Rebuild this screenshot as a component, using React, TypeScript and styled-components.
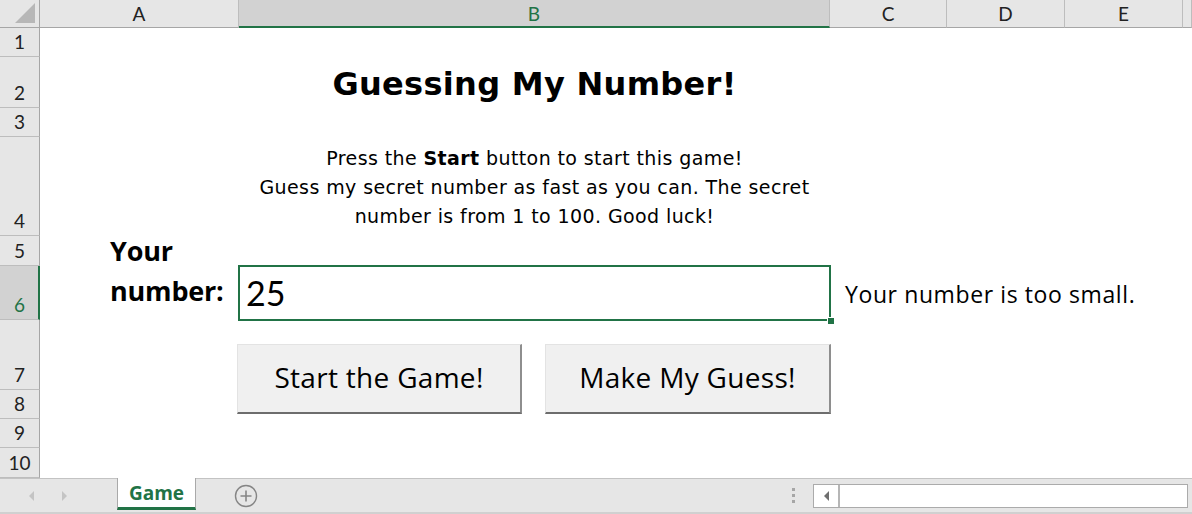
import React from "react";
import styled, { createGlobalStyle, css } from "styled-components";

const GREEN = "#217346";
const HEADER_BG = "#e6e6e6";
const HEADER_SEL = "#d2d2d2";
const HEADER_LINE = "#bdbdbd";

const COLS = [40, 199, 591, 117, 118, 118, 9];
const ROWS = [29, 51, 29, 99, 30, 54, 70, 29, 29, 30];
const LETTERS = ["A", "B", "C", "D", "E", ""];

const Global = createGlobalStyle`
  html, body { margin: 0; padding: 0; background: #fff; }
  body { width: 1192px; height: 514px; overflow: hidden; font-family: "Lato", "Liberation Sans", sans-serif; }
`;

const Window = styled.div`
  width: 1192px;
  height: 514px;
  display: flex;
  flex-direction: column;
  overflow: hidden;
`;

const Sheet = styled.div`
  display: grid;
  grid-template-columns: ${COLS.map((c) => (c === 9 ? "1fr" : `${c}px`)).join(" ")};
  grid-template-rows: 28px ${ROWS.map((r) => `${r}px`).join(" ")};
  height: 478px;
  background: #fff;
`;

const Corner = styled.div`
  grid-column: 1;
  grid-row: 1;
  background: ${HEADER_BG};
  border-right: 1px solid #a6a6a6;
  border-bottom: 1px solid #a6a6a6;
  box-sizing: border-box;
  position: relative;
  &::after {
    content: "";
    position: absolute;
    right: 4px;
    bottom: 4px;
    width: 0;
    height: 0;
    border-left: 20px solid transparent;
    border-bottom: 20px solid #b7b7b7;
  }
`;

const ColHeader = styled.div<{ $col: number; $sel?: boolean }>`
  grid-row: 1;
  grid-column: ${(p) => p.$col};
  background: ${(p) => (p.$sel ? HEADER_SEL : HEADER_BG)};
  border-right: 1px solid ${HEADER_LINE};
  border-bottom: ${(p) => (p.$sel ? `2px solid ${GREEN}` : "1px solid #a6a6a6")};
  box-sizing: border-box;
  display: flex;
  align-items: center;
  justify-content: center;
  font-family: "Lato", "Liberation Sans", sans-serif;
  font-size: 19px;
  color: ${(p) => (p.$sel ? GREEN : "#222")};
  padding-top: ${(p) => (p.$sel ? "1px" : "0")};
`;

const RowHeader = styled.div<{ $row: number; $sel?: boolean }>`
  grid-column: 1;
  grid-row: ${(p) => p.$row};
  background: ${(p) => (p.$sel ? HEADER_SEL : HEADER_BG)};
  border-bottom: 1px solid ${HEADER_LINE};
  border-right: ${(p) => (p.$sel ? `2px solid ${GREEN}` : "1px solid #a6a6a6")};
  box-sizing: border-box;
  display: flex;
  align-items: flex-end;
  justify-content: center;
  padding-bottom: 3px;
  font-family: "Lato", "Liberation Sans", sans-serif;
  font-size: 19px;
  line-height: 22px;
  color: ${(p) => (p.$sel ? GREEN : "#222")};
  ${(p) =>
    p.$sel &&
    css`
      padding-left: 1px;
    `}
`;

const Cell = styled.div<{ $col: string; $row: string }>`
  grid-column: ${(p) => p.$col};
  grid-row: ${(p) => p.$row};
  min-width: 0;
`;

const Title = styled(Cell)`
  display: flex;
  align-items: center;
  justify-content: center;
  font-family: "DejaVu Sans", "Open Sans", sans-serif;
  font-weight: 700;
  font-size: 32px;
  letter-spacing: 0.3px;
  color: #000;
  padding-top: 2px;
  white-space: nowrap;
`;

const Intro = styled(Cell)`
  display: flex;
  flex-direction: column;
  align-items: center;
  justify-content: flex-end;
  padding-bottom: 5px;
  font-family: "DejaVu Sans", "Open Sans", sans-serif;
  font-size: 19px;
  letter-spacing: 0.4px;
  line-height: 29px;
  color: #000;
  text-align: center;
  white-space: nowrap;
  b { font-weight: 700; }
`;

const Label = styled(Cell)`
  display: flex;
  flex-direction: column;
  justify-content: flex-end;
  padding-left: 70px;
  padding-bottom: 9px;
  font-family: "Open Sans", "Lato", sans-serif;
  font-weight: 700;
  font-size: 27px;
  letter-spacing: -0.2px;
  line-height: 40px;
  color: #000;
`;

const Active = styled(Cell)`
  margin: -1px -1px -1px -1px;
  border: 2px solid ${GREEN};
  position: relative;
  display: flex;
  align-items: flex-end;
  padding: 0 0 6px 6px;
  font-family: "Lato", "Liberation Sans", sans-serif;
  font-size: 34px;
  line-height: 40px;
  color: #000;
`;

const FillHandle = styled.span`
  position: absolute;
  right: -5px;
  bottom: -5px;
  width: 6px;
  height: 6px;
  background: ${GREEN};
  border: 1px solid #fff;
  border-right: none;
  border-bottom: none;
`;

const Message = styled(Cell)`
  display: flex;
  align-items: center;
  padding-left: 15px;
  padding-top: 1px;
  font-family: "Open Sans", "Lato", sans-serif;
  font-size: 23px;
  letter-spacing: 0.6px;
  color: #000;
  white-space: nowrap;
`;

const Buttons = styled(Cell)`
  display: flex;
  align-items: flex-start;
  gap: 23px;
  margin-left: -2px;
  padding-top: 24px;
`;

const Btn = styled.button<{ $w: number }>`
  width: ${(p) => p.$w}px;
  height: 70px;
  flex: none;
  background: #f0f0f0;
  border: none;
  border-top: 1px solid #e3e3e3;
  border-left: 1px solid #e3e3e3;
  border-right: 2px solid #8e8e8e;
  border-bottom: 2px solid #6d6d6d;
  box-sizing: border-box;
  font-family: "Open Sans", "Lato", sans-serif;
  font-size: 28px;
  letter-spacing: 0.3px;
  color: #000;
  padding: 0 0 3px 0;
  cursor: default;
`;

const TabBar = styled.div`
  height: 36px;
  box-sizing: border-box;
  border-top: 1px solid #c3c3c3;
  border-bottom: 2px solid #d0d0d0;
  background: ${HEADER_BG};
  display: flex;
  align-items: stretch;
`;

const NavArrows = styled.div`
  width: 117px;
  display: flex;
  align-items: center;
  gap: 28px;
  padding-left: 29px;
  box-sizing: border-box;
`;

const Arrow = styled.span<{ $dir: "left" | "right"; $color: string }>`
  width: 0;
  height: 0;
  border-top: 5px solid transparent;
  border-bottom: 5px solid transparent;
  ${(p) =>
    p.$dir === "left"
      ? css`border-right: 5px solid ${p.$color};`
      : css`border-left: 5px solid ${p.$color};`}
`;

const Tab = styled.div`
  width: 79px;
  margin-top: -1px;
  margin-bottom: 2px;
  background: #fff;
  border-left: 1px solid #a9a9a9;
  border-right: 1px solid #a9a9a9;
  border-bottom: 3px solid ${GREEN};
  box-sizing: border-box;
  display: flex;
  align-items: center;
  justify-content: center;
  font-family: "Open Sans", "Lato", sans-serif;
  font-weight: 700;
  font-size: 19px;
  color: ${GREEN};
`;

const AddSheet = styled.div`
  width: 100px;
  display: flex;
  align-items: center;
  padding-left: 38px;
  box-sizing: border-box;
`;

const Spacer = styled.div`
  flex: 1;
`;

const Dots = styled.div`
  width: 19px;
  margin-right: 10px;
  display: flex;
  flex-direction: column;
  justify-content: center;
  align-items: center;
  gap: 3px;
  span {
    width: 3px;
    height: 3px;
    background: #a6a6a6;
  }
`;

const ScrollBar = styled.div`
  width: 375px;
  margin: 5px 4px 4px 0;
  border: 1px solid #ababab;
  background: #fff;
  display: flex;
  box-sizing: border-box;
`;

const ScrollBtn = styled.div`
  width: 24px;
  border-right: 2px solid #b6b6b6;
  display: flex;
  align-items: center;
  justify-content: center;
`;

const PlusIcon = () => (
  <svg width="24" height="24" viewBox="0 0 24 24">
    <circle cx="12" cy="12" r="10.5" fill="none" stroke="#858585" strokeWidth="1.4" />
    <path d="M12 6.5v11M6.5 12h11" stroke="#858585" strokeWidth="1.6" />
  </svg>
);

export default function App() {
  return (
    <Window>
      <Global />
      <Sheet>
        <Corner />
        {LETTERS.map((l, i) => (
          <ColHeader key={i} $col={i + 2} $sel={l === "B"}>
            {l}
          </ColHeader>
        ))}
        {ROWS.map((_, i) => (
          <RowHeader key={i} $row={i + 2} $sel={i === 5}>
            {i + 1}
          </RowHeader>
        ))}

        <Title $col="3" $row="3">Guessing My Number!</Title>

        <Intro $col="3" $row="5">
          <span>
            Press the <b>Start</b> button to start this game!
          </span>
          <span>Guess my secret number as fast as you can. The secret</span>
          <span>number is from 1 to 100. Good luck!</span>
        </Intro>

        <Label $col="2" $row="6 / span 2">
          <span>Your</span>
          <span>number:</span>
        </Label>

        <Active $col="3" $row="7">
          25
          <FillHandle />
        </Active>

        <Message $col="4 / span 3" $row="7">Your number is too small.</Message>

        <Buttons $col="3" $row="8 / span 2">
          <Btn $w={285}>Start the Game!</Btn>
          <Btn $w={286}>Make My Guess!</Btn>
        </Buttons>
      </Sheet>

      <TabBar>
        <NavArrows>
          <Arrow $dir="left" $color="#c4c4c4" />
          <Arrow $dir="right" $color="#c4c4c4" />
        </NavArrows>
        <Tab>Game</Tab>
        <AddSheet>
          <PlusIcon />
        </AddSheet>
        <Spacer />
        <Dots>
          <span />
          <span />
          <span />
        </Dots>
        <ScrollBar>
          <ScrollBtn>
            <Arrow $dir="left" $color="#6f6f6f" />
          </ScrollBtn>
        </ScrollBar>
      </TabBar>
    </Window>
  );
}
